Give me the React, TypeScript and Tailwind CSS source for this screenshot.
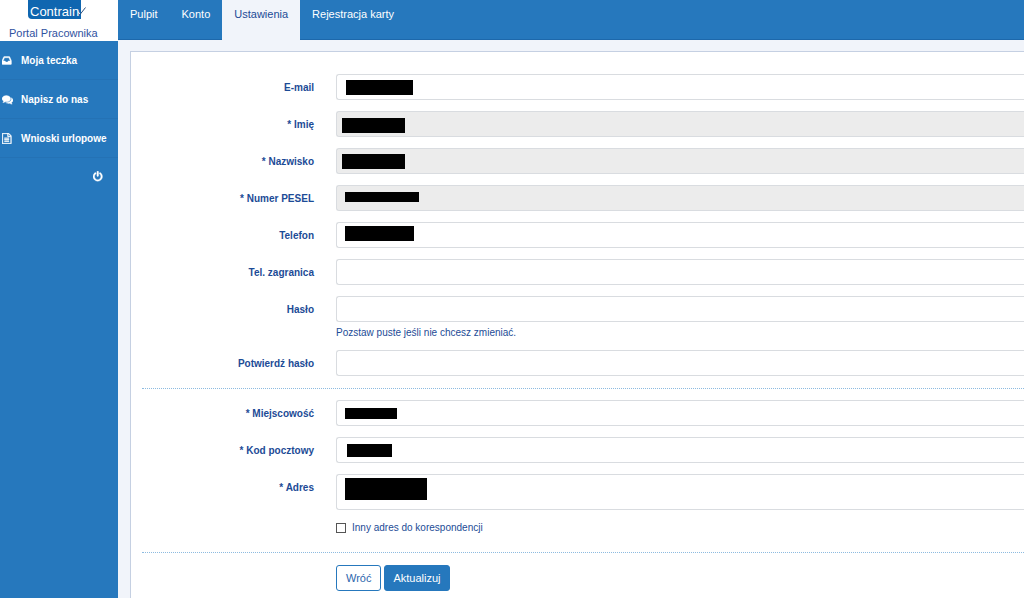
import React from "react";

const icons = {
  inbox:
    "M1023 960h316q-1-3-2.5-8.5t-2.5-7.5l-212-496h-708l-212 496q-1 3-2.5 8.5t-2.5 7.5h316l95 192h320zM1536 990v482q0 26-19 45t-45 19h-1408q-26 0-45-19t-19-45v-482q0-62 25-123l238-552q10-25 36.5-42t52.5-17h832q26 0 52.5 17t36.5 42l238 552q25 61 25 123z",
  comments:
    "M1408 768q0 139-94 257t-256.5 186.5-353.5 68.5q-86 0-176-16-124 88-278 128-36 9-86 16h-3q-11 0-20.5-8t-11.5-21q-1-3-1-6.5t.5-6.5 2-6l2.5-5 3.5-5.5 4-5 4.5-5 4-4.5q5-6 23-25t26-29.5 22.5-29 25-38.5 20.5-44q-124-72-195-177t-71-224q0-139 94-257t256.5-186.5 353.5-68.5 353.5 68.5 256.5 186.5 94 257zM1792 1024q0 120-71 224.5t-195 176.5q10 24 20.5 44t25 38.5 22.5 29 26 29.5 23 25q1 1 4 4.5t4.5 5 4 5 3.5 5.5l2.5 5t2 6 .5 6.5-1 6.5q-3 14-13 22t-22 7q-50-7-86-16-154-40-278-128-90 16-176 16-271 0-472-132 58 4 88 4 161 0 309-45t264-129q125-92 192-212t67-254q0-77-23-152 129 71 204 178t75 230z",
  file:
    "M1468 380q28 28 48 76t20 88v1152q0 40-28 68t-68 28h-1344q-40 0-68-28t-28-68v-1600q0-40 28-68t68-28h896q40 0 88 20t76 48zM1024 136v376h376q-10-29-22-41l-313-313q-12-12-41-22zM1408 1664v-1024h-416q-40 0-68-28t-28-68v-416h-768v1536h1280zM384 800q0-14 9-23t23-9h704q14 0 23 9t9 23v64q0 14-9 23t-23 9h-704q-14 0-23-9t-9-23v-64zM1120 1024q14 0 23 9t9 23v64q0 14-9 23t-23 9h-704q-14 0-23-9t-9-23v-64q0-14 9-23t23-9h704zM1120 1280q14 0 23 9t9 23v64q0 14-9 23t-23 9h-704q-14 0-23-9t-9-23v-64q0-14 9-23t23-9h704z",
  power:
    "M1536 896q0 156-61 298t-164 245-245 164-298 61-298-61-245-164-164-245-61-298q0-182 80.5-343t226.5-270q43-32 95.5-25t83.5 50q32 42 24.5 94.5t-49.5 84.5q-98 74-151.5 181t-53.5 228q0 104 40.5 198.5t109.5 163.5 163.5 109.5 198.5 40.5 198.5-40.5 163.5-109.5 109.5-163.5 40.5-198.5q0-121-53.5-228t-151.5-181q-42-32-49.5-84.5t24.5-94.5q31-43 84-50t95 25q146 109 226.5 270t80.5 343zM896 128v640q0 52-38 90t-90 38-90-38-38-90v-640q0-52 38-90t90-38 90 38 38 90z",
};

interface IconProps {
  name: keyof typeof icons;
  className?: string;
}

const Icon: React.FC<IconProps> = ({ name, className }) => (
  <svg viewBox="0 0 1792 1792" fill="currentColor" stroke="currentColor" strokeWidth="60" className={className} aria-hidden="true">
    <path d={icons[name]} />
  </svg>
);

const tabs = ["Pulpit", "Konto", "Ustawienia", "Rejestracja karty"];

const menu: { label: string; icon: keyof typeof icons }[] = [
  { label: "Moja teczka", icon: "inbox" },
  { label: "Napisz do nas", icon: "comments" },
  { label: "Wnioski urlopowe", icon: "file" },
];

interface FieldProps {
  id: string;
  label: string;
  type?: string;
  disabled?: boolean;
  multiline?: boolean;
  help?: string;
  // place and size of the black box that hides the value
  mask?: string;
}

const Field: React.FC<FieldProps> = ({ id, label, type = "text", disabled, multiline, help, mask }) => (
  <div className="flex items-start gap-[22px]">
    <label htmlFor={id} className="w-[172px] shrink-0 pt-0.5 text-right font-bold leading-6">
      {label}
    </label>
    <div className="relative min-w-0 flex-1">
      {multiline ? (
        <textarea
          id={id}
          className="block h-9 w-full resize-none rounded-l-[3px] border border-r-0 border-[#d9dce0] bg-white px-2 py-1 outline-none"
        />
      ) : (
        <input
          id={id}
          type={type}
          disabled={disabled}
          className="block h-[26px] w-full rounded-l-[3px] border border-r-0 border-[#d9dce0] bg-white px-2 outline-none disabled:bg-[#ececec]"
        />
      )}
      {mask && <span className={`absolute bg-black ${mask}`} />}
      {help && <p className="mt-1 leading-[13px]">{help}</p>}
    </div>
  </div>
);

const App = () => {
  return (
    <div className="flex min-h-screen bg-[#f1f4fa] font-['Liberation_Sans',Arial,sans-serif] text-[10px] text-[#1c4b96]">
      <aside className="w-[118px] shrink-0 bg-[#2678bd] text-white">
        <div className="flex h-[41px] flex-col bg-white text-[#2f52a0]">
          <div className="ml-7 flex h-[19px]">
            <span className="rounded-bl-[4px] bg-[#0f66b0] px-0.5 text-[13px] leading-6 text-white">
              Contrain
            </span>
            <svg viewBox="0 0 9 12" className="-ml-1 mt-1 h-3 w-[9px] shrink-0" fill="none" aria-hidden="true">
              <path d="M1 7.5l2 2.5" stroke="#fff" />
              <path d="M3 10.5L8.5 3.5" stroke="#2b4f7c" />
            </svg>
          </div>
          <span className="pl-[9px] text-[11px] leading-7 whitespace-nowrap">Portal Pracownika</span>
        </div>
        <nav>
          {menu.map((item) => (
            <a
              key={item.label}
              href="#"
              className="flex h-[39px] items-center gap-2 border-b border-[#2472b5] pl-0.5 font-bold whitespace-nowrap"
            >
              <Icon name={item.icon} className="size-[11px] shrink-0" />
              {item.label}
            </a>
          ))}
          <a href="#" aria-label="Wyloguj" className="flex h-9 items-center justify-end pr-3.5">
            <Icon name="power" className="size-[11px]" />
          </a>
        </nav>
      </aside>

      <div className="flex min-w-0 flex-1 flex-col">
        <nav className="flex h-10 border-b border-[#1d68ab] bg-[#2678bd] text-[11px] text-white">
          {tabs.map((tab) => (
            <a
              key={tab}
              href="#"
              className={
                tab === "Ustawienia"
                  ? "h-10 bg-[#f1f4fa] px-3 leading-7 text-[#1c4b96]"
                  : "h-10 px-3 leading-7 whitespace-nowrap"
              }
            >
              {tab}
            </a>
          ))}
        </nav>

        <main className="flex-1 pt-[11px] pl-3">
          <form className="h-full border-t border-l border-[#c5d0e2] bg-white pt-[22px] pl-[11px]">
            <div className="flex flex-col gap-[11px]">
              <Field id="email" label="E-mail" mask="left-[10px] top-[6px] h-[15px] w-[67px]" />
              <Field id="imie" label="* Imię" disabled mask="left-[6px] top-[7px] h-[15px] w-[63px]" />
              <Field id="nazwisko" label="* Nazwisko" disabled mask="left-[6px] top-[6px] h-[15px] w-[63px]" />
              <Field id="pesel" label="* Numer PESEL" disabled mask="left-[9px] top-[7px] h-[10px] w-[74px]" />
              <Field id="telefon" label="Telefon" mask="left-[9px] top-[4px] h-[15px] w-[69px]" />
              <Field id="zagranica" label="Tel. zagranica" />
              <Field id="haslo" label="Hasło" type="password" help="Pozstaw puste jeśli nie chcesz zmieniać." />
              <Field id="haslo2" label="Potwierdź hasło" type="password" />
            </div>
            <hr className="mt-3 mb-[11px] border-t border-dotted border-[#8dbbe0]" />
            <div className="flex flex-col gap-[11px]">
              <Field id="miejscowosc" label="* Miejscowość" mask="left-[9px] top-[8px] h-[11px] w-[52px]" />
              <Field id="kod" label="* Kod pocztowy" mask="left-[11px] top-[7px] h-[13px] w-[45px]" />
              <Field id="adres" label="* Adres" multiline mask="left-[9px] top-[4px] h-[22px] w-[82px]" />
              <label className="ml-[194px] flex items-center gap-1.5 leading-[14px]">
                <input
                  type="checkbox"
                  className="size-[10px] appearance-none border border-[#555] bg-white checked:bg-[#2678bd]"
                />
                Inny adres do korespondencji
              </label>
            </div>
            <hr className="mt-[17px] mb-3 border-t border-dotted border-[#8dbbe0]" />
            <div className="ml-[194px] flex gap-[3px] pb-2">
              <button type="button" className="h-[26px] rounded-[3px] border border-[#2678bd] bg-white px-[9px] text-[11px] text-[#2c66ad]">
                Wróć
              </button>
              <button type="submit" className="h-[26px] rounded-[3px] border border-[#2678bd] bg-[#2678bd] px-2 text-[11px] text-white">
                Aktualizuj
              </button>
            </div>
          </form>
        </main>
      </div>
    </div>
  );
};

export default App;
